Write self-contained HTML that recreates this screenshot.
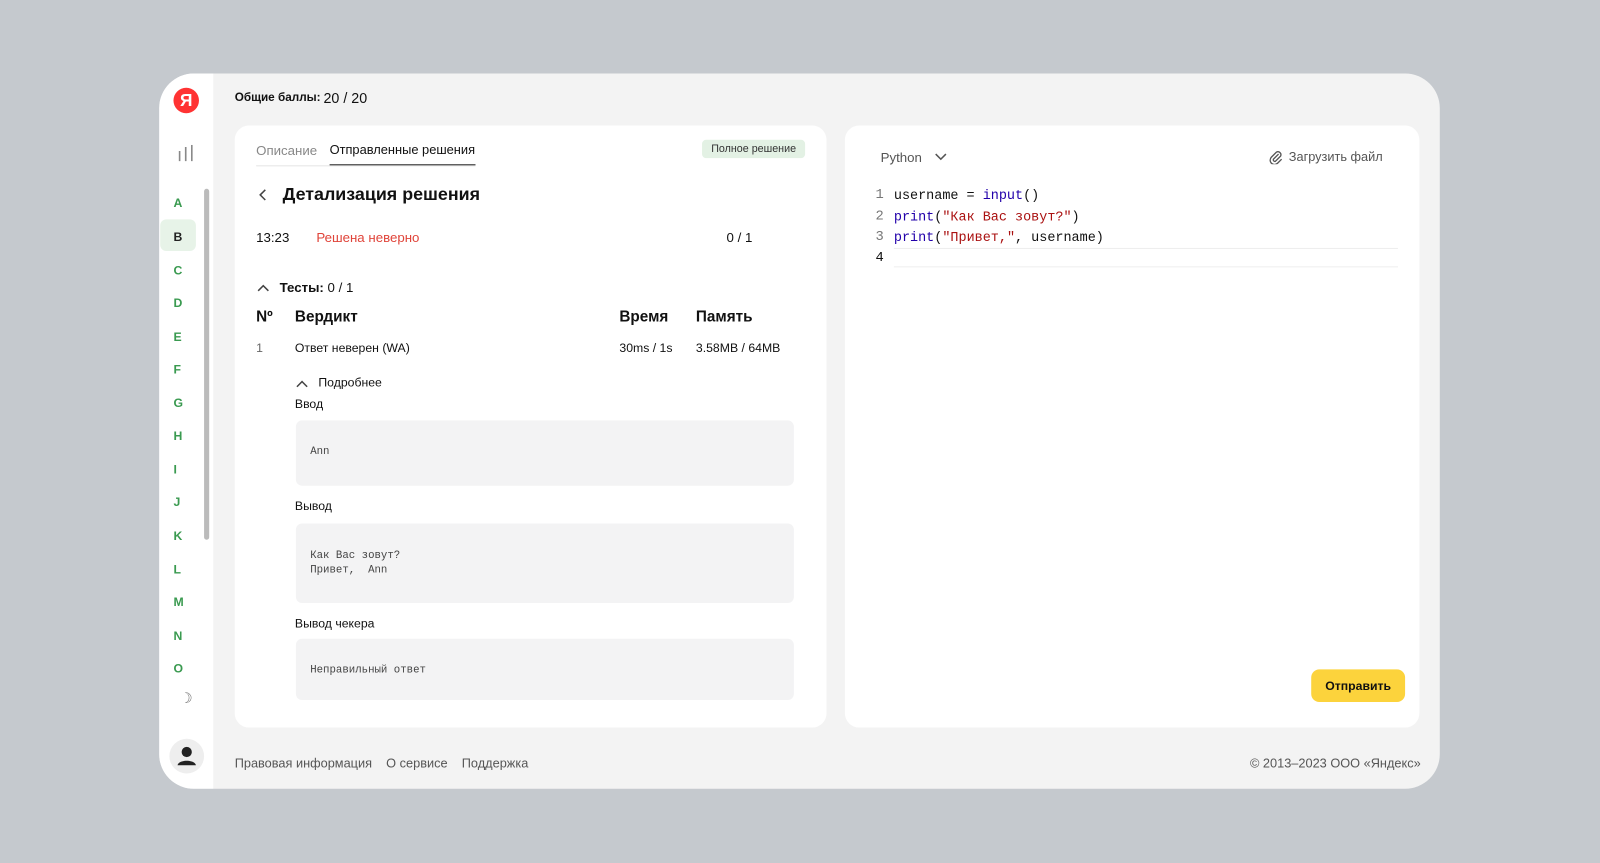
<!DOCTYPE html>
<html><head><meta charset="utf-8"><style>
*{margin:0;padding:0;box-sizing:border-box}
body{width:1600px;height:863px;overflow:hidden;background:#c5c9ce;font-family:"Liberation Sans",sans-serif;color:#111}
#w{position:absolute;left:0;top:0;width:1568px;height:846px;transform:scale(1.0204);transform-origin:0 0}
.a{position:absolute}
.card{left:156px;top:72px;width:1255px;height:701px;background:#f3f3f3;border-radius:34px;overflow:hidden}
.side{left:0;top:0;width:53px;height:701px;background:#fff}
.p{background:#fff;border-radius:14px}
.t13{font-size:13px}
.mono{font-family:"Liberation Mono",monospace}
.box{background:#f3f3f4;border-radius:6px;left:60px;width:488px}
.lt{color:#3a9a50;font-size:12px;font-weight:bold;left:14px}
</style></head><body><div id="w">
<div class="a card">
 <div class="a side">
  <div class="a" style="left:14px;top:14px;width:25px;height:25px;border-radius:50%;background:#f33;color:#fff;font-weight:bold;font-size:17px;text-align:center;line-height:25px">Я</div>
  <svg class="a" style="left:19px;top:70px" width="14" height="16"><path d="M1 6v10M7 2v14M13 0v16" stroke="#888" stroke-width="1.6"/></svg>
  <div class="a" style="left:1px;top:143px;width:35px;height:31px;background:#e7f3e8;border-radius:6px"></div>
  <div class="a" style="left:44px;top:113px;width:5px;height:344px;background:#bbb;border-radius:3px"></div>
  <div class="a lt" style="top:120px">A</div><div class="a lt" style="top:153px;color:#222">B</div>
  <div class="a lt" style="top:186px">C</div><div class="a lt" style="top:218px">D</div>
  <div class="a lt" style="top:251px">E</div><div class="a lt" style="top:283px">F</div>
  <div class="a lt" style="top:316px">G</div><div class="a lt" style="top:348px">H</div>
  <div class="a lt" style="top:381px">I</div><div class="a lt" style="top:413px">J</div>
  <div class="a lt" style="top:446px">K</div><div class="a lt" style="top:479px">L</div>
  <div class="a lt" style="top:511px">M</div><div class="a lt" style="top:544px">N</div>
  <div class="a lt" style="top:576px">O</div>
  <div class="a" style="left:20px;top:604px;color:#777;font-size:14px">☽</div>
  <div class="a" style="left:10px;top:652px;width:34px;height:34px;border-radius:50%;background:#eee"><svg width="34" height="34"><circle cx="17" cy="13" r="5" fill="#222"/><path d="M8 26c1-6 17-6 18 0z" fill="#222"/></svg></div>
 </div>
 <div class="a" style="left:74px;top:18px;font-size:11.5px;font-weight:bold">Общие баллы:</div>
 <div class="a" style="left:161px;top:16px;font-size:14px">20 / 20</div>
 <div class="a p" style="left:74px;top:51px;width:580px;height:590px">
  <div class="a t13" style="left:21px;top:17px;color:#888">Описание</div>
  <div class="a" style="left:93px;top:17px;font-size:12.6px">Отправленные решения</div>
  <div class="a" style="left:21px;top:39px;width:215px;height:1px;background:#e5e5e5"></div>
  <div class="a" style="left:93px;top:38px;width:143px;height:1px;background:#222"></div>
  <div class="a" style="left:458px;top:14px;background:#e3f1e4;border-radius:4px;font-size:10.5px;padding:3px 9px;color:#333">Полное решение</div>
  <svg class="a" style="left:23px;top:61px" width="10" height="14"><path d="M7 2L2 7l5 5" fill="none" stroke="#444" stroke-width="1.5"/></svg>
  <div class="a" style="left:47px;top:57px;font-size:17.5px;font-weight:bold">Детализация решения</div>
  <div class="a t13" style="left:21px;top:102px">13:23</div>
  <div class="a t13" style="left:80px;top:102px;color:#e0443a">Решена неверно</div>
  <div class="a t13" style="left:482px;top:102px">0 / 1</div>
  <svg class="a" style="left:21px;top:154px" width="14" height="10"><path d="M2 8l5-5 5 5" fill="none" stroke="#444" stroke-width="1.5"/></svg>
  <div class="a t13" style="left:44px;top:151px"><b>Тесты:</b> 0 / 1</div>
  <div class="a" style="left:21px;top:179px;font-size:15px;font-weight:bold">Nº</div>
  <div class="a" style="left:59px;top:179px;font-size:15px;font-weight:bold">Вердикт</div>
  <div class="a" style="left:377px;top:179px;font-size:15px;font-weight:bold">Время</div>
  <div class="a" style="left:452px;top:179px;font-size:15px;font-weight:bold">Память</div>
  <div class="a" style="left:21px;top:211px;font-size:12px;color:#666">1</div>
  <div class="a" style="left:59px;top:211px;font-size:12px">Ответ неверен (WA)</div>
  <div class="a" style="left:377px;top:211px;font-size:12px">30ms / 1s</div>
  <div class="a" style="left:452px;top:211px;font-size:12px">3.58MB / 64MB</div>
  <svg class="a" style="left:59px;top:248px" width="14" height="10"><path d="M2 8l5-5 5 5" fill="none" stroke="#444" stroke-width="1.5"/></svg>
  <div class="a" style="left:82px;top:245px;font-size:12px">Подробнее</div>
  <div class="a" style="left:59px;top:266px;font-size:12px">Ввод</div>
  <div class="a box" style="top:289px;height:64px"><div class="mono" style="font-size:10.5px;color:#444;padding:25px 14px">Ann</div></div>
  <div class="a" style="left:59px;top:366px;font-size:12px">Вывод</div>
  <div class="a box" style="top:390px;height:78px"><div class="mono" style="font-size:10.5px;color:#444;padding:25px 14px;line-height:14px;white-space:pre">Как Вас зовут?
Привет,  Ann</div></div>
  <div class="a" style="left:59px;top:481px;font-size:12px">Вывод чекера</div>
  <div class="a box" style="top:503px;height:60px"><div class="mono" style="font-size:10.5px;color:#444;padding:25px 14px">Неправильный ответ</div></div>
 </div>
 <div class="a p" style="left:672px;top:51px;width:563px;height:590px">
  <div class="a t13" style="left:35px;top:24px;color:#555">Python</div>
  <svg class="a" style="left:87px;top:26px" width="14" height="10"><path d="M2 2l5 5 5-5" fill="none" stroke="#555" stroke-width="1.5"/></svg>
  <svg class="a" style="left:416px;top:25px" width="13" height="13"><path d="M9 3L4 8a1.5 1.5 0 002 2l5-5a3 3 0 00-4-4L2 6a4 4 0 006 6l4-4" fill="none" stroke="#555" stroke-width="1.3"/></svg>
  <div class="a" style="left:435px;top:24px;font-size:12.5px;color:#555">Загрузить файл</div>
  <div class="a mono" style="left:30px;top:59px;font-size:13.5px;line-height:20.5px;color:#777;white-space:pre">1
2
3
<span style="color:#111">4</span></div>
  <div class="a" style="left:48px;top:120px;width:494px;height:19px;border:1px solid #eee;border-left:none;border-right:none"></div>
  <div class="a mono" style="left:48px;top:59px;font-size:13.2px;line-height:20.5px;white-space:pre">username = <span style="color:#20a">input</span>()
<span style="color:#20a">print</span>(<span style="color:#a11">"Как Вас зовут?"</span>)
<span style="color:#20a">print</span>(<span style="color:#a11">"Привет,"</span>, username)</div>
  <div class="a" style="left:457px;top:533px;width:92px;height:32px;background:#fcd33c;border-radius:8px;font-size:12px;font-weight:bold;text-align:center;line-height:32px">Отправить</div>
 </div>
 <div class="a" style="left:74px;top:669px;font-size:12.5px;color:#555">Правовая информация&nbsp;&nbsp;&nbsp;&nbsp;О сервисе&nbsp;&nbsp;&nbsp;&nbsp;Поддержка</div>
 <div class="a" style="left:1069px;top:669px;font-size:12.5px;color:#555">© 2013–2023 ООО «Яндекс»</div>
</div>
</div></body></html>
